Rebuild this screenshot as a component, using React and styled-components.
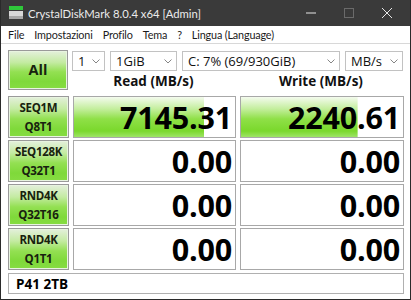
import React from "react";
import styled, { createGlobalStyle } from "styled-components";

const GlobalStyle = createGlobalStyle`
  html, body {
    margin: 0;
    padding: 0;
    background: #ffffff;
  }
  body {
    font-family: "Open Sans", "Noto Sans", "DejaVu Sans", sans-serif;
  }
`;

const tests = [
  { name: "SEQ1M", sub: "Q8T1", read: "7145.31", write: "2240.61", readBar: 81, writeBar: 72 },
  { name: "SEQ128K", sub: "Q32T1", read: "0.00", write: "0.00", readBar: 0, writeBar: 0 },
  { name: "RND4K", sub: "Q32T16", read: "0.00", write: "0.00", readBar: 0, writeBar: 0 },
  { name: "RND4K", sub: "Q1T1", read: "0.00", write: "0.00", readBar: 0, writeBar: 0 },
];

const menuItems = ["File", "Impostazioni", "Profilo", "Tema", "?", "Lingua (Language)"];

export default function App() {
  return (
    <>
      <GlobalStyle />
      <Window>
        <TitleBar>
          <AppIcon viewBox="0 0 16 16">
            <rect x="1" y="1" width="14" height="4" fill="#2fc83a" />
            <rect x="1" y="6" width="14" height="8" fill="#d8d8d8" />
            <rect x="1" y="11" width="14" height="3" fill="#a8a8a8" />
          </AppIcon>
          <Title>CrystalDiskMark 8.0.4 x64 [Admin]</Title>
          <Controls>
            <Control>
              <svg width="12" height="12" viewBox="0 0 12 12">
                <line x1="1" y1="6" x2="11" y2="6" stroke="#e6e6e6" strokeWidth="1" />
              </svg>
            </Control>
            <Control>
              <svg width="12" height="12" viewBox="0 0 12 12">
                <rect x="1.5" y="1.5" width="9" height="9" fill="none" stroke="#6a6a6a" strokeWidth="1" />
              </svg>
            </Control>
            <Control>
              <svg width="12" height="12" viewBox="0 0 12 12">
                <path d="M1 1 L11 11 M11 1 L1 11" stroke="#e6e6e6" strokeWidth="1" />
              </svg>
            </Control>
          </Controls>
        </TitleBar>

        <MenuBar>
          {menuItems.map((m) => (
            <MenuItem key={m}>{m}</MenuItem>
          ))}
        </MenuBar>

        <Content>
          <TopSection>
            <GreenButton $big>All</GreenButton>
            <TopRight>
              <SelectRow>
                <Select $w={33}>
                  <span>1</span>
                  <Chevron />
                </Select>
                <Select $w={67}>
                  <span>1GiB</span>
                  <Chevron />
                </Select>
                <Select $w={158}>
                  <span>C: 7% (69/930GiB)</span>
                  <Chevron />
                </Select>
                <Select $w={58}>
                  <span>MB/s</span>
                  <Chevron />
                </Select>
              </SelectRow>
              <HeaderRow>
                <Header>Read (MB/s)</Header>
                <Header>Write (MB/s)</Header>
              </HeaderRow>
            </TopRight>
          </TopSection>

          <ResultGrid>
            {tests.map((t, i) => (
              <React.Fragment key={i}>
                <GreenButton>
                  <span>{t.name}</span>
                  <span>{t.sub}</span>
                </GreenButton>
                <Cell style={{ backgroundSize: `${t.readBar}% 100%` }}>{t.read}</Cell>
                <Cell style={{ backgroundSize: `${t.writeBar}% 100%` }}>{t.write}</Cell>
              </React.Fragment>
            ))}
          </ResultGrid>

          <Comment>P41 2TB</Comment>
        </Content>
      </Window>
    </>
  );
}

function Chevron() {
  return (
    <ChevronIcon viewBox="0 0 8 5">
      <path d="M0.5 0.5 L4 4 L7.5 0.5" fill="none" stroke="#777" strokeWidth="0.9" />
    </ChevronIcon>
  );
}

const Window = styled.div`
  width: 411px;
  height: 300px;
  box-sizing: border-box;
  border: 1px solid #2a2a2a;
  border-top: none;
  display: flex;
  flex-direction: column;
  overflow: hidden;
  background: #ffffff;
`;

const TitleBar = styled.div`
  height: 26px;
  flex-shrink: 0;
  background: #3a3a3a;
  display: flex;
  align-items: center;
  padding-left: 7px;
  padding-right: 4px;
`;

const AppIcon = styled.svg`
  width: 16px;
  height: 16px;
  margin-right: 4px;
`;

const Title = styled.div`
  color: #ececec;
  font-size: 11.3px;
  font-family: Lato, "Noto Sans", sans-serif;
  flex: 1;
`;

const Controls = styled.div`
  display: flex;
  height: 100%;
`;

const Control = styled.div`
  width: 38px;
  display: flex;
  align-items: center;
  justify-content: center;
`;

const MenuBar = styled.div`
  height: 17px;
  flex-shrink: 0;
  display: flex;
  align-items: center;
  padding-left: 2px;
  background: #ffffff;
  border-bottom: 1px solid #d8d8d8;
`;

const MenuItem = styled.div`
  font-family: Lato, "Noto Sans", sans-serif;
  font-size: 10.8px;
  letter-spacing: -0.15px;
  color: #1a1a1a;
  padding: 0 5px;
`;

const Content = styled.div`
  padding: 6px 7px 0 7px;
  display: flex;
  flex-direction: column;
`;

const TopSection = styled.div`
  display: flex;
  gap: 4px;
`;

const GreenButton = styled.div`
  width: 61px;
  height: ${(p) => (p.$big ? "40px" : "42px")};
  box-sizing: border-box;
  border: 1px solid #9a9a9a;
  box-shadow: inset 0 0 0 1px #e8f4e0;
  background: linear-gradient(
    to bottom,
    #e4f0dc 0%,
    #c4eba2 30%,
    #93e052 55%,
    #7fd93a 80%,
    #86dc42 100%
  );
  display: flex;
  flex-direction: column;
  align-items: center;
  justify-content: center;
  font-weight: 700;
  font-size: ${(p) => (p.$big ? "14.5px" : "11.5px")};
  line-height: ${(p) => (p.$big ? "1" : "19px")};
  letter-spacing: ${(p) => (p.$big ? "0" : "-0.3px")};
  color: #18220f;
`;

const TopRight = styled.div`
  display: flex;
  flex-direction: column;
  width: 331px;
`;

const SelectRow = styled.div`
  display: flex;
  justify-content: space-between;
  margin-top: 1px;
`;

const Select = styled.div`
  width: ${(p) => p.$w}px;
  height: 20px;
  box-sizing: border-box;
  border: 1px solid #c2c2c2;
  background: #ffffff;
  display: flex;
  align-items: center;
  justify-content: space-between;
  padding: 0 4px 0 5px;
  font-size: 13px;
  color: #111;
  white-space: nowrap;
`;

const ChevronIcon = styled.svg`
  width: 8px;
  height: 5px;
  flex-shrink: 0;
`;

const HeaderRow = styled.div`
  display: grid;
  grid-template-columns: 163px 164px;
  column-gap: 4px;
  height: 20px;
  align-items: center;
`;

const Header = styled.div`
  text-align: center;
  font-weight: 700;
  font-size: 13.5px;
  color: #111;
`;

const ResultGrid = styled.div`
  display: grid;
  grid-template-columns: 61px 163px 164px;
  grid-auto-rows: 42px;
  column-gap: 4px;
  row-gap: 2px;
  margin-top: 5px;
`;

const Cell = styled.div`
  box-sizing: border-box;
  border: 1px solid #a8a8a8;
  background-color: #ffffff;
  background-image: linear-gradient(
    to bottom,
    #f4fbee 0%,
    #c3ee9c 30%,
    #8fe047 55%,
    #7ad82c 85%,
    #9ee466 100%
  );
  background-repeat: no-repeat;
  background-position: left top;
  display: flex;
  align-items: center;
  justify-content: flex-end;
  padding-right: 3px;
  font-weight: 700;
  font-size: 30.5px;
  letter-spacing: -0.2px;
  color: #000;
  font-family: "Open Sans", "Noto Sans", sans-serif;
`;

const Comment = styled.div`
  margin-top: 3px;
  width: 396px;
  height: 21px;
  box-sizing: border-box;
  border: 1px solid #b0b0b0;
  display: flex;
  align-items: center;
  padding-left: 7px;
  font-weight: 700;
  font-size: 13.5px;
  color: #000;
`;
